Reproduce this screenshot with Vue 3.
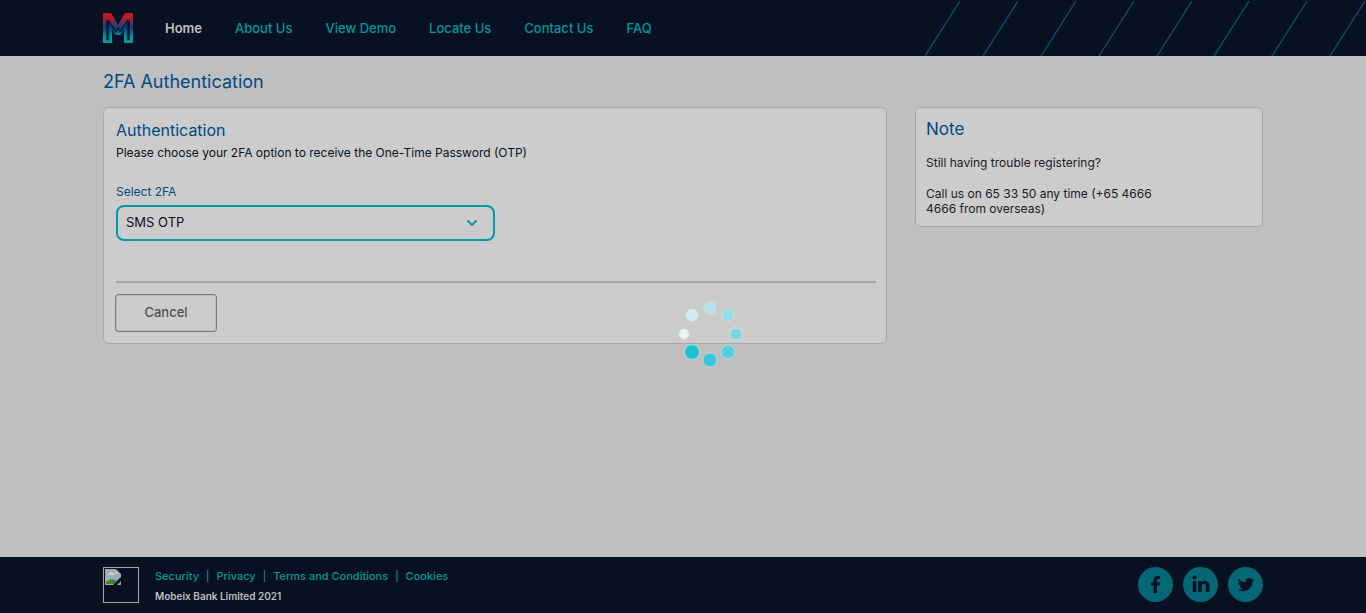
<script setup>
import { ref } from 'vue'

const navItems = ['Home', 'About Us', 'View Demo', 'Locate Us', 'Contact Us', 'FAQ']
const legalLinks = ['Security', 'Privacy', 'Terms and Conditions', 'Cookies']
const stripes = [-35, 23, 81, 139, 197, 254, 312, 370]
const method = ref('sms')
const dots = [
  { x: 32, y: 7, r: 6, fill: '#b2e4e9' },
  { x: 50, y: 14, r: 6, fill: '#93dde4' },
  { x: 58, y: 33, r: 6, fill: '#75d6df' },
  { x: 50, y: 51, r: 7, fill: '#57d0dc' },
  { x: 32, y: 59, r: 7, fill: '#39cad9' },
  { x: 14, y: 51, r: 7.5, fill: '#1bc3d5' },
  { x: 6, y: 33, r: 5, fill: '#eef3f5' },
  { x: 14, y: 14, r: 6, fill: '#d0ecef' },
]
</script>

<template>
  <div class="page">
    <header class="topbar">
      <svg class="stripes" width="441" height="56" viewBox="0 0 441 56" aria-hidden="true">
        <path v-for="x in stripes" :key="x" :d="`M${x + 35} 56 L${x + 70} 1`" stroke="#075670" stroke-width="1.3" />
      </svg>
      <div class="container topbar-inner">
        <svg class="logo" width="30" height="30" viewBox="0 0 30 30" role="img" aria-label="Mobeix">
          <defs>
            <linearGradient id="logo-fade" x1="0" y1="0" x2="0" y2="30" gradientUnits="userSpaceOnUse">
              <stop offset="0.12" stop-color="#c5151e" />
              <stop offset="0.5" stop-color="#07478a" />
              <stop offset="0.8" stop-color="#009ba5" />
            </linearGradient>
          </defs>
          <path fill="url(#logo-fade)" d="M0 0H8L15 12L22 0H30V30H21V16L17.500 22H12.500L9 16V30H0Z" />
          <path fill="none" stroke="#081121" stroke-width="1.600" d="M3.500 6V27H5.800V8L14 19.500H16L24.200 8V27H26.500V6" opacity="0.3" />
          <path fill="none" stroke="#081121" stroke-width="2" d="M4.500 8V27M25.500 8V27" />
          <path fill="none" stroke="#081121" stroke-width="1.300" d="M5 7L12.500 18.500L15 15L17.500 18.500L25 7" opacity="0.85" />
        </svg>
        <nav class="nav">
          <a v-for="(item, i) in navItems" :key="item" href="#" :class="{ active: i === 0 }">{{ item }}</a>
        </nav>
      </div>
    </header>

    <main class="container main">
      <h1>2FA Authentication</h1>
      <div class="columns">
        <form class="card auth" @submit.prevent>
          <h2>Authentication</h2>
          <p>Please choose your 2FA option to receive the One-Time Password (OTP)</p>
          <label for="method">Select 2FA</label>
          <div class="select-wrap">
            <select id="method" v-model="method">
              <option value="sms">SMS OTP</option>
            </select>
            <svg class="chevron" width="12" height="8" viewBox="0 0 12 8" aria-hidden="true">
              <path d="M1.500 1.500L6 6L10.500 1.500" fill="none" stroke="#009ba8" stroke-width="1.800" />
            </svg>
          </div>
          <hr />
          <button type="button" class="cancel">Cancel</button>
        </form>
        <aside class="card note">
          <h2>Note</h2>
          <p>Still having trouble registering?</p>
          <p>Call us on 65 33 50 any time (+65 4666 4666 from overseas)</p>
        </aside>
      </div>
    </main>

    <footer class="footer">
      <div class="container footer-inner">
        <div class="missing">
          <svg width="16" height="16" viewBox="0 0 16 16" aria-hidden="true">
            <path d="M0.500 0.500H11L15.500 5V15.500H0.500Z" fill="#929da9" stroke="#a5a5a5" />
            <path d="M1 1H10V5H15V9L9 15H1Z" fill="#9caabc" />
            <path d="M10 1V5H15Z" fill="#c5c5c5" />
            <path d="M3 6Q3 4 5 4Q6 2 8 4Q9 4 9 6Z" fill="#d0d0d0" />
            <path d="M1 15V13Q6 8 12 12L9 15Z" fill="#3d8a2d" />
            <path d="M8 16L16 8V12L12 16Z" fill="#081121" />
          </svg>
        </div>
        <div class="legal">
          <div class="links">
            <template v-for="(link, i) in legalLinks" :key="link">
              <span v-if="i" class="bar">|</span>
              <a href="#">{{ link }}</a>
            </template>
          </div>
          <p>Mobeix Bank Limited 2021</p>
        </div>
        <div class="social">
          <a href="#" aria-label="Facebook">
            <svg width="35" height="35" viewBox="0 0 35 35">
              <path d="M15.500 26V18.500H13V15.500H15.500V13.500C15.500 10.500 17 9 19.500 9H22V12H20.500C19.300 12 19 12.500 19 13.500V15.500H22L21.500 18.500H19V26Z" />
            </svg>
          </a>
          <a href="#" aria-label="LinkedIn">
            <svg width="35" height="35" viewBox="0 0 35 35">
              <circle cx="11.500" cy="10.500" r="2" />
              <path d="M9.800 14H13.200V25H9.800ZM15.200 14H18.600V15.500C19.300 14.300 20.500 13.700 22 13.700C25 13.700 26.300 15.800 26.300 18.700V25H22.800V19.500C22.800 17.800 22.500 16.800 21 16.800C19.300 16.800 18.700 18 18.700 19.500V25H15.200Z" />
            </svg>
          </a>
          <a href="#" aria-label="Twitter">
            <svg width="35" height="35" viewBox="0 0 35 35">
              <path transform="translate(9.500 9.500)" d="M16.500 3.200C15.900 3.500 15.200 3.700 14.600 3.800C15.300 3.400 15.800 2.700 16 2C15.400 2.400 14.700 2.700 13.900 2.800A3.300 3.300 0 0 0 8.200 5.800C5.400 5.700 3 4.400 1.300 2.300C0.400 3.800 0.900 5.700 2.300 6.700C1.800 6.700 1.300 6.500 0.800 6.300C0.800 7.900 2 9.200 3.500 9.500C3 9.700 2.500 9.700 2 9.600C2.400 10.900 3.700 11.900 5.100 11.900C3.700 13 2 13.500 0.200 13.300C7 17.200 14.900 12.800 14.900 5.300V4.900C15.500 4.400 16.100 3.900 16.500 3.200Z" />
            </svg>
          </a>
        </div>
      </div>
    </footer>

    <svg class="spinner" width="66" height="68" viewBox="0 0 66 68" role="img" aria-label="Loading">
      <circle v-for="dot in dots" :key="dot.fill" :cx="dot.x" :cy="dot.y" :r="dot.r" :fill="dot.fill" stroke="#d8e9ea" stroke-width="0.600" />
    </svg>
  </div>
</template>

<style>
body {
  margin: 0;
}
</style>

<style scoped>
.page {
  min-height: 100vh;
  display: flex;
  flex-direction: column;
  background: #bfbfbf;
  color: #1b1b1b;
  font-family: Inter, Roboto, sans-serif;
  font-size: 12px;
  line-height: 15px;
}
.page * {
  box-sizing: border-box;
}
a {
  color: #00979f;
  text-decoration: none;
}
h1,
h2,
p {
  margin: 0;
  font-weight: 400;
}
h1,
h2 {
  color: #004a86;
}
.container {
  width: calc(100% - 32px);
  max-width: 1160px;
  margin: 0 auto;
}
.topbar,
.footer {
  height: 56px;
  background: #081121;
}
.topbar {
  position: relative;
}
.stripes {
  position: absolute;
  top: 0;
  right: 0;
}
.topbar-inner {
  height: 100%;
  display: flex;
  align-items: center;
  gap: 32px;
}
.nav {
  display: flex;
  gap: 33px;
  font-size: 13px;
  font-weight: 500;
}
.nav .active {
  color: #bfbfbf;
  font-weight: 600;
}
.main {
  flex: 1;
  padding-top: 16px;
}
h1 {
  font-size: 18px;
  line-height: 20px;
  margin-bottom: 15px;
}
.columns {
  display: grid;
  grid-template-columns: 784fr 348fr;
  gap: 28px;
  align-items: start;
}
.card {
  border: 1px solid #a8a8a8;
  border-radius: 6px;
  background: #ccc;
}
.auth {
  padding: 12px 10px 12px 12px;
  color: #081121;
}
.auth h2 {
  font-size: 16px;
  line-height: 20px;
  margin-bottom: 5px;
}
.auth label {
  display: block;
  margin: 24px 0 6px;
  color: #004a86;
}
.select-wrap {
  position: relative;
  max-width: 379px;
}
select {
  display: block;
  width: 100%;
  height: 36px;
  padding: 0 8px 1px;
  border: 2px solid #009ba8;
  border-radius: 8px;
  background: transparent;
  color: #081121;
  font: inherit;
  font-size: 13px;
  appearance: none;
}
.chevron {
  position: absolute;
  right: 17px;
  top: 14px;
}
hr {
  height: 2px;
  margin: 40px 0 12px;
  border: 0;
  background: #a6a6a6;
}
.cancel {
  display: block;
  width: 100px;
  height: 36px;
  padding: 0 0 1px;
  border: 1px solid #b8b8b8;
  border-radius: 3px;
  box-shadow: 0 0 0 1px #7b7b7b;
  background: transparent;
  color: #505050;
  font: inherit;
  font-size: 13px;
  font-weight: 500;
}
.note {
  padding: 11px 10px 10px;
}
.note h2 {
  font-size: 17px;
  line-height: 20px;
}
.note p {
  margin-top: 16px;
  max-width: 75%;
}
.footer-inner {
  height: 100%;
  display: flex;
  align-items: center;
  gap: 16px;
}
.missing {
  width: 36px;
  height: 36px;
  border: 1px solid #a5a5a5;
  padding: 1px;
}
.legal {
  flex: 1;
  padding-top: 2px;
  font-size: 11px;
  font-weight: 500;
}
.legal p {
  margin-top: 5px;
  color: #bfbfbf;
  font-size: 10px;
  font-weight: 600;
}
.links {
  display: flex;
  gap: 7px;
  color: #00979f;
}
.bar {
  font-size: 10px;
}
.social {
  display: flex;
  gap: 10px;
  padding-bottom: 2px;
}
.social a {
  width: 35px;
  height: 35px;
  border-radius: 50%;
  background: #036775;
}
.social svg {
  display: block;
  fill: #081121;
}
.spinner {
  position: fixed;
  left: calc(50% - 5px);
  top: calc(50% - 6px);
}
</style>
